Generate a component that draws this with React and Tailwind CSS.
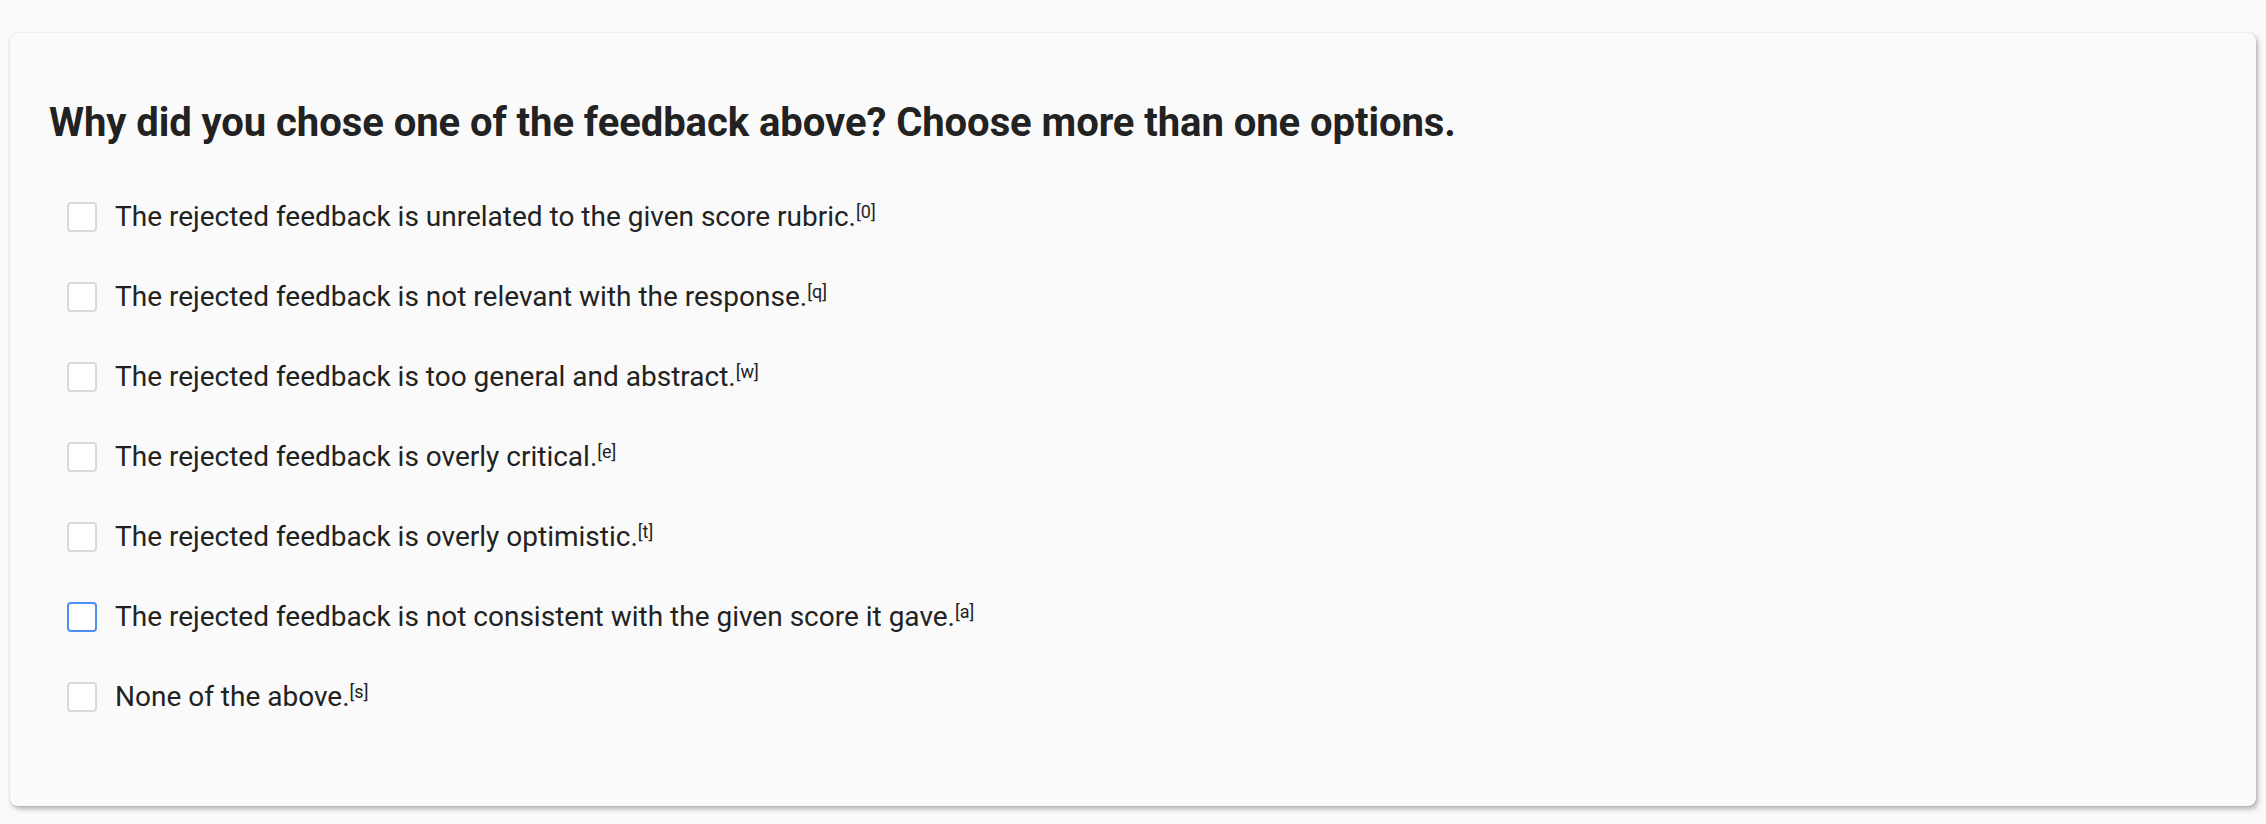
import React from "react";

const items = [
  ["The rejected feedback is unrelated to the given score rubric.", "0"],
  ["The rejected feedback is not relevant with the response.", "q"],
  ["The rejected feedback is too general and abstract.", "w"],
  ["The rejected feedback is overly critical.", "e"],
  ["The rejected feedback is overly optimistic.", "t"],
  ["The rejected feedback is not consistent with the given score it gave.", "a"],
  ["None of the above.", "s"],
];

export default function App() {
  return (
    <div className="min-h-screen bg-[#f9f9f9] pt-[33px] pb-[18px] px-[10px]" style={{ fontFamily: "Roboto, 'Liberation Sans', sans-serif" }}>
      <div className="bg-[#fafafa] rounded-[8px] shadow-[2px_3px_5px_rgba(0,0,0,0.28),0_0_2px_rgba(0,0,0,0.12)] pl-[39px] pr-[40px] pt-[63px] pb-[95px] h-[773px]">
        <h1 className="text-[40px] leading-[54px] font-bold text-[#222222] tracking-[-0.06px]">
          Why did you chose one of the feedback above? Choose more than one options.
        </h1>
        <div className="mt-[52px] flex flex-col gap-[50px] pl-[18px]">
          {items.map(([t, k], i) => (
            <label key={k} className="flex items-center h-[30px] gap-[18px]">
              <span
                className={
                  "w-[30px] h-[30px] rounded-[4px] bg-white border-2 shrink-0 " +
                  (i === 5 ? "border-[#4d8ff7]" : "border-[#d9d9d9]")
                }
              />
              <span className="text-[28px] leading-[30px] text-[#222222] whitespace-nowrap">
                {t}
                <sup className="text-[18px] leading-none align-top relative top-[1px]">[{k}]</sup>
              </span>
            </label>
          ))}
        </div>
      </div>
    </div>
  );
}
